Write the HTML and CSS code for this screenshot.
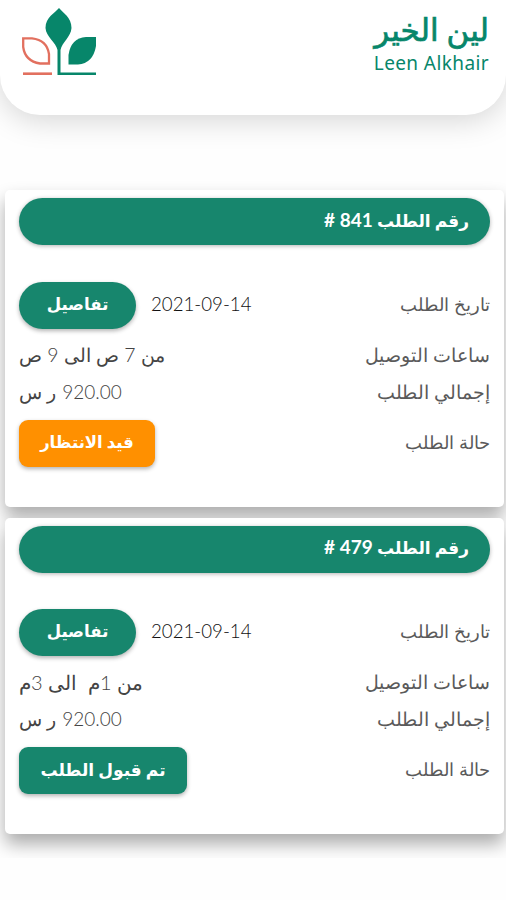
FILE: index.html
```html
<!DOCTYPE html>
<html lang="ar" dir="rtl">
<head>
    <meta charset="UTF-8">
    <meta name="viewport" content="width=device-width, initial-scale=1.0">
    <title>لين الخير</title>
    <link rel="stylesheet" href="styles.css">
</head>
<body>
    <main class="page">
        <header class="header">
            <div class="brand">
                <span class="brand-ar">لين الخير</span>
                <span class="brand-en" dir="ltr">Leen Alkhair</span>
            </div>
            <svg class="logo" width="76" height="70" viewBox="0 0 76 70">
                <path d="M38 0C42 5 50.500 9 50.500 20C50 29 41 34 39.500 42V64.500H75V67H36.500V42C35 34 25 29 24.500 20C24.500 9 34 5 38 0Z" fill="#07866a"/>
                <path d="M75 29V38Q72 55.500 57 56.500H47.500V47Q50 30 65 29Z" fill="#07866a"/>
                <path d="M2.200 30.300H11Q26 32 28 46V55.500H19Q4 53 2.200 39Z" fill="none" stroke="#e2705f" stroke-width="2.300"/>
                <path d="M2 65.700H31" stroke="#e2705f" stroke-width="2.600"/>
            </svg>
        </header>

        <section class="orders">
            <article class="card">
                <h2 class="card-title"><span>رقم الطلب <span class="number">841 #</span></span></h2>
                <div class="row row-tall">
                    <span class="label label-date">تاريخ الطلب</span>
                    <div class="value">
                        <span class="date" dir="ltr">2021-09-14</span>
                        <button class="btn btn-details">تفاصيل</button>
                    </div>
                </div>
                <div class="row">
                    <span class="label">ساعات التوصيل</span>
                    <span class="value hours">من 7 ص الى 9 ص</span>
                </div>
                <div class="row">
                    <span class="label">إجمالي الطلب</span>
                    <span class="value total">920.00 <span class="currency">ر س</span></span>
                </div>
                <div class="row row-status">
                    <span class="label label-status">حالة الطلب</span>
                    <button class="btn btn-status waiting">قيد الانتظار</button>
                </div>
            </article>

            <article class="card">
                <h2 class="card-title"><span>رقم الطلب <span class="number">479 #</span></span></h2>
                <div class="row row-tall">
                    <span class="label label-date">تاريخ الطلب</span>
                    <div class="value">
                        <span class="date" dir="ltr">2021-09-14</span>
                        <button class="btn btn-details">تفاصيل</button>
                    </div>
                </div>
                <div class="row">
                    <span class="label">ساعات التوصيل</span>
                    <span class="value hours hours-wide">من 1م&nbsp; الى 3م</span>
                </div>
                <div class="row">
                    <span class="label">إجمالي الطلب</span>
                    <span class="value total">920.00 <span class="currency">ر س</span></span>
                </div>
                <div class="row row-status">
                    <span class="label label-status">حالة الطلب</span>
                    <button class="btn btn-status accepted">تم قبول الطلب</button>
                </div>
            </article>
        </section>
    </main>
</body>
</html>
```
FILE: styles.css
```css
* {
    box-sizing: border-box;
}
body {
    margin: 0;
    background-color: #fefefe;
    color: #5a5a5a;
    font-family: Lato, "DejaVu Sans", sans-serif;
}
.page {
    height: 858px;
    overflow: hidden;
}
.header {
    height: 115px;
    padding: 8px 17px 0 21px;
    display: flex;
    justify-content: space-between;
    align-items: flex-start;
    background-color: #fff;
    border-radius: 0 0 40px 40px;
    box-shadow: 0 5px 30px rgba(0,0,0,0.17);
}
.brand {
    display: flex;
    flex-direction: column;
    align-items: flex-start;
    color: #07866a;
    white-space: nowrap;
}
.brand-ar {
    font-size: 31px;
    line-height: 42px;
    -webkit-text-stroke: 0.7px #07866a;
}
.brand-en {
    font-family: "Noto Sans", sans-serif;
    font-size: 19px;
    letter-spacing: 0.4px;
    line-height: 26px;
}
.orders {
    padding: 75px 2px 0 5px;
    display: flex;
    flex-direction: column;
    gap: 11px;
}
.card {
    height: 316.500px;
    padding: 8px 14px 0;
    background-color: #fff;
    border-radius: 5px;
    box-shadow: 0 10px 18px rgba(0,0,0,0.33);
}
.card-title {
    height: 47px;
    margin: 0 0 29px;
    padding: 0 21px 3px;
    display: flex;
    align-items: center;
    background-color: #17866d;
    border-radius: 24px;
    box-shadow: 0 1px 4px rgba(0,0,0,0.3);
    color: #fff;
    font-size: 17px;
    line-height: 24px;
}
.number {
    font-size: 19px;
}
.row {
    height: 37px;
    display: flex;
    justify-content: space-between;
    align-items: center;
    font-size: 19px;
    font-weight: 300;
    line-height: 24px;
    white-space: nowrap;
}
.row-tall {
    height: 62px;
}
.row-status {
    height: 66px;
}
.label-date, .label-status, .date {
    padding-bottom: 3px;
}
.label-date, .label-status {
    font-size: 18.400px;
}
.value {
    display: flex;
    align-items: center;
    gap: 15px;
}
.date {
    color: #111;
    font-size: 18.700px;
}
.total {
    gap: 6px;
    color: #444;
}
.hours {
    display: block;
    font-size: 19.400px;
    color: #444;
}
.hours-wide {
    font-size: 20px;
}
.btn {
    height: 47px;
    padding: 0 0 3px;
    border: none;
    background-color: #17866d;
    box-shadow: 0 2px 4px rgba(0,0,0,0.3);
    color: #fff;
    font-family: inherit;
    font-size: 16.500px;
    font-weight: bold;
    white-space: nowrap;
}
.btn-details {
    width: 117px;
    border-radius: 24px;
}
.btn-status {
    border-radius: 9px;
}
.waiting {
    width: 136px;
    background-color: #ff9000;
}
.accepted {
    width: 168px;
    font-size: 17px;
}
```
